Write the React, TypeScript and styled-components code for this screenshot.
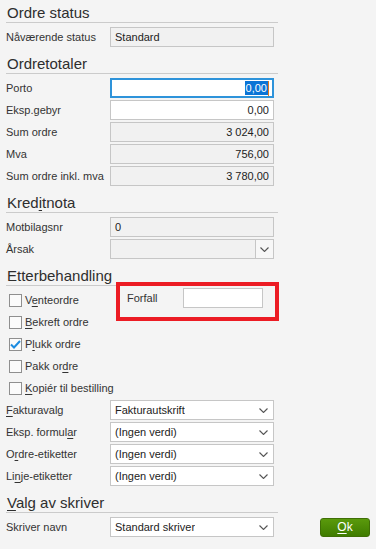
import styled, { createGlobalStyle, css } from 'styled-components';

const GlobalStyle = createGlobalStyle`
  html, body {
    margin: 0;
    padding: 0;
    height: 100%;
    background: #f4f4f4;
  }
  body {
    font-family: "Liberation Sans", Arial, sans-serif;
    color: #333333;
  }
`;

// small pieces

const Key = ({ children }: { children: string }) => <Mnemonic>{children}</Mnemonic>;

const Chevron = () => (
  <svg width="9" height="5" viewBox="0 0 9 5">
    <path d="M0.5 0.5 L4.5 4.5 L8.5 0.5" fill="none" stroke="#555" strokeWidth="1.1" />
  </svg>
);

const Tick = () => (
  <svg width="11" height="9" viewBox="0 0 11 9">
    <path d="M1 4.5 L4 7.5 L10 1" fill="none" stroke="#1d8ce0" strokeWidth="2" />
  </svg>
);

type SelectProps = { value?: string; disabled?: boolean };

const Select = ({ value = '', disabled }: SelectProps) => (
  <SelectBox $disabled={disabled}>
    <span className="value">{value}</span>
    <ArrowButton $boxed={disabled}>
      <Chevron />
    </ArrowButton>
  </SelectBox>
);

type CheckProps = { checked?: boolean; children: React.ReactNode };

const Check = ({ checked, children }: CheckProps) => (
  <CheckRow>
    <CheckBox>{checked && <Tick />}</CheckBox>
    <span>{children}</span>
  </CheckRow>
);

const App = () => {
  return (
    <>
      <GlobalStyle />
      <Page>
        <Section>
          <SectionHeader>Ordre status</SectionHeader>
          <Rows>
            <FieldRow>
              <Label>Nåværende status</Label>
              <TextBox $disabled>Standard</TextBox>
            </FieldRow>
          </Rows>
        </Section>

        <Section>
          <SectionHeader>Ordretotaler</SectionHeader>
          <Rows>
            <FieldRow>
              <Label>Porto</Label>
              <TextBox $align="right" $focused>
                <Selected>0,00</Selected>
                <Caret />
              </TextBox>
            </FieldRow>
            <FieldRow>
              <Label>Eksp.gebyr</Label>
              <TextBox $align="right">0,00</TextBox>
            </FieldRow>
            <FieldRow>
              <Label>Sum ordre</Label>
              <TextBox $align="right" $disabled>3 024,00</TextBox>
            </FieldRow>
            <FieldRow>
              <Label>Mva</Label>
              <TextBox $align="right" $disabled>756,00</TextBox>
            </FieldRow>
            <FieldRow>
              <Label>Sum ordre inkl. mva</Label>
              <TextBox $align="right" $disabled>3 780,00</TextBox>
            </FieldRow>
          </Rows>
        </Section>

        <Section>
          <SectionHeader>
            Kred<Key>i</Key>tnota
          </SectionHeader>
          <Rows>
            <FieldRow>
              <Label>Motbilagsnr</Label>
              <TextBox $disabled>0</TextBox>
            </FieldRow>
            <FieldRow>
              <Label>Årsak</Label>
              <Select disabled />
            </FieldRow>
          </Rows>
        </Section>

        <Section>
          <SectionHeader>Etterbehandling</SectionHeader>
          <Rows>
            <CheckArea>
              <CheckList>
                <Check>
                  V<Key>e</Key>nteordre
                </Check>
                <Check>
                  <Key>B</Key>ekreft ordre
                </Check>
                <Check checked>
                  P<Key>l</Key>ukk ordre
                </Check>
                <Check>
                  Pakk or<Key>d</Key>re
                </Check>
                <Check>
                  <Key>K</Key>opiér til bestilling
                </Check>
              </CheckList>
              <ForfallGroup>
                <ForfallLabel>Forfall</ForfallLabel>
                <TextBox $width={80} />
                <Highlight />
              </ForfallGroup>
            </CheckArea>
            <FieldRow>
              <Label>
                <Key>F</Key>akturavalg
              </Label>
              <Select value="Fakturautskrift" />
            </FieldRow>
            <FieldRow>
              <Label>
                Eksp. formul<Key>a</Key>r
              </Label>
              <Select value="(Ingen verdi)" />
            </FieldRow>
            <FieldRow>
              <Label>
                O<Key>r</Key>dre-etiketter
              </Label>
              <Select value="(Ingen verdi)" />
            </FieldRow>
            <FieldRow>
              <Label>
                Li<Key>n</Key>je-etiketter
              </Label>
              <Select value="(Ingen verdi)" />
            </FieldRow>
          </Rows>
        </Section>

        <Section>
          <SectionHeader>
            <Key>V</Key>alg av skriver
          </SectionHeader>
          <Rows>
            <FieldRow>
              <Label>Skriver navn</Label>
              <Select value="Standard skriver" />
              <OkButton>
                <Key>O</Key>k
              </OkButton>
            </FieldRow>
          </Rows>
        </Section>
      </Page>
    </>
  );
};

export default App;

const Page = styled.div`
  padding: 0 6px;
  display: flex;
  flex-direction: column;
  gap: 4px;
`;

const Section = styled.section`
  display: flex;
  flex-direction: column;
`;

const SectionHeader = styled.div`
  width: 272px;
  height: 23px;
  box-sizing: border-box;
  padding: 3px 0 0 1px;
  line-height: 19px;
  font-size: 15px;
  color: #2e2e2e;
  border-bottom: 1px solid #cbcbcb;
`;

const Rows = styled.div`
  display: flex;
  flex-direction: column;
  gap: 2px;
  margin-top: 4px;
`;

const FieldRow = styled.div`
  display: flex;
  align-items: center;
  height: 20px;
`;

const Label = styled.span`
  width: 104px;
  flex-shrink: 0;
  font-size: 11px;
  white-space: nowrap;
  color: #333;
`;

const Mnemonic = styled.span`
  text-decoration: underline;
  text-underline-offset: 2px;
`;

const fieldBase = css`
  box-sizing: border-box;
  height: 20px;
  border: 1px solid #c6c6c6;
  font-size: 11px;
  color: #222;
  display: flex;
  align-items: center;
  white-space: nowrap;
`;

const TextBox = styled.div<{
  $align?: 'left' | 'right';
  $disabled?: boolean;
  $focused?: boolean;
  $width?: number;
}>`
  ${fieldBase};
  width: ${(p) => p.$width ?? 164}px;
  padding: 0 4px;
  justify-content: ${(p) => (p.$align === 'right' ? 'flex-end' : 'flex-start')};
  background: ${(p) => (p.$disabled ? '#f1f1f1' : '#ffffff')};
  ${(p) =>
    p.$focused &&
    css`
      border: 2px solid #2e93da;
      padding: 0 3px;
    `}
`;

const Selected = styled.span`
  background: #0a74d6;
  color: #ffffff;
  line-height: 14px;
  padding: 0 1px;
`;

const Caret = styled.span`
  width: 1px;
  height: 15px;
  background: #e0781e;
`;

const SelectBox = styled.div<{ $disabled?: boolean }>`
  ${fieldBase};
  width: 164px;
  padding-left: 4px;
  background: ${(p) => (p.$disabled ? '#f1f1f1' : '#ffffff')};
  justify-content: space-between;

  .value {
    overflow: hidden;
  }
`;

const ArrowButton = styled.div<{ $boxed?: boolean }>`
  width: 17px;
  height: 100%;
  display: flex;
  align-items: center;
  justify-content: center;
  margin-right: 1px;
  ${(p) =>
    p.$boxed &&
    css`
      margin-right: 0;
      border-left: 1px solid #c6c6c6;
      background: #f7f7f7;
    `}
`;

const CheckArea = styled.div`
  display: flex;
  align-items: flex-start;
`;

const CheckList = styled.div`
  width: 110px;
  display: flex;
  flex-direction: column;
  gap: 2px;
`;

const CheckRow = styled.div`
  display: flex;
  align-items: center;
  gap: 3px;
  height: 20px;
  padding-left: 3px;
  font-size: 11px;
  white-space: nowrap;
  color: #333;
`;

const CheckBox = styled.span`
  box-sizing: border-box;
  width: 13px;
  height: 13px;
  border: 1px solid #8f8f8f;
  background: #fbfbfb;
  display: flex;
  align-items: center;
  justify-content: center;
`;

const ForfallGroup = styled.div`
  position: relative;
  display: flex;
  align-items: center;
  margin: -2px 0 0 11px;
`;

const ForfallLabel = styled.span`
  width: 56px;
  font-size: 11px;
  color: #333;
`;

const Highlight = styled.div`
  position: absolute;
  top: -6px;
  left: -11px;
  right: -16px;
  bottom: -13px;
  border: 4px solid #ec1c24;
  pointer-events: none;
`;

const OkButton = styled.button`
  margin-left: 46px;
  width: 50px;
  height: 19px;
  padding: 0;
  border: 1px solid #3f6f06;
  border-radius: 3px;
  background: linear-gradient(#5a9a0c, #3f7c00);
  color: #ffffff;
  font-family: "Liberation Sans", Arial, sans-serif;
  font-size: 12px;
  cursor: pointer;
`;
